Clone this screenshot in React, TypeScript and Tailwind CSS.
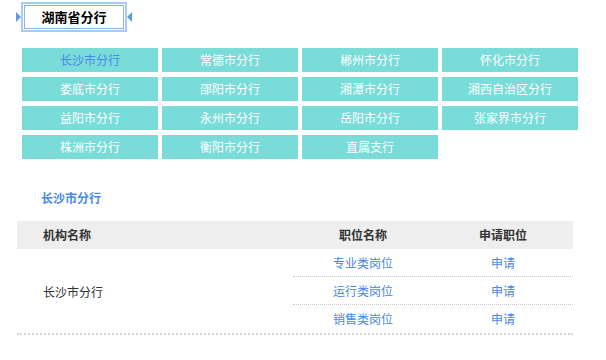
const branches = [
  '长沙市分行', '常德市分行', '郴州市分行', '怀化市分行',
  '娄底市分行', '邵阳市分行', '湘潭市分行', '湘西自治区分行',
  '益阳市分行', '永州市分行', '岳阳市分行', '张家界市分行',
  '株洲市分行', '衡阳市分行', '直属支行',
]

const jobs = ['专业类岗位', '运行类岗位', '销售类岗位']

export default function App() {
  return (
    <div className="w-[606px] h-[360px] bg-white font-['Noto_Sans_CJK_SC',sans-serif] text-[12px] text-[#333]">
      {/* title */}
      <div className="flex items-center pl-4 pt-[2px]">
        <span className="w-0 h-0 border-y-[5px] border-y-transparent border-l-[5px] border-l-[#5d9be6]" />
        <div className="w-[106px] h-[30px] border-2 border-[#a9caf1] p-[1px]">
          <div className="h-full border border-[#8ab5ea] bg-white flex items-center justify-center text-[13px] font-bold text-black">
            湖南省分行
          </div>
        </div>
        <span className="w-0 h-0 border-y-[5px] border-y-transparent border-r-[5px] border-r-[#5d9be6]" />
      </div>

      {/* branch grid */}
      <div className="ml-[22px] mt-4 grid grid-cols-[repeat(4,136px)] gap-x-1 gap-y-[5px]">
        {branches.map((b, i) => (
          <div
            key={b}
            className={`h-6 bg-[#79dcd9] flex items-center justify-center text-[12px] ${i === 0 ? 'text-[#4a84e6]' : 'text-white'}`}
          >
            {b}
          </div>
        ))}
      </div>

      {/* current branch */}
      <div className="ml-[41px] mt-[31px] text-[12px] font-bold text-[#4a89ec] leading-[16px]">长沙市分行</div>

      {/* jobs table */}
      <div className="ml-[17px] mt-[15px] w-[556px]">
        <div className="h-7 bg-[#eeeeee] flex items-center font-bold text-[#333]">
          <div className="w-[276px] pl-[26px]">机构名称</div>
          <div className="w-[140px] text-center">职位名称</div>
          <div className="w-[140px] text-center">申请职位</div>
        </div>
        <div className="flex border-b-2 border-dotted border-[#d6d6d6]">
          <div className="w-[276px] pl-[26px] pt-[2px] flex items-center">长沙市分行</div>
          <div className="w-[280px] flex flex-col">
            {jobs.map((j, i) => (
              <div
                key={j}
                className={`h-7 flex items-center text-[#4a84e6] ${i < jobs.length - 1 ? 'border-b border-dotted border-[#cccccc]' : ''}`}
              >
                <div className="w-[140px] text-center">{j}</div>
                <div className="w-[140px] text-center">申请</div>
              </div>
            ))}
          </div>
        </div>
      </div>
    </div>
  )
}
